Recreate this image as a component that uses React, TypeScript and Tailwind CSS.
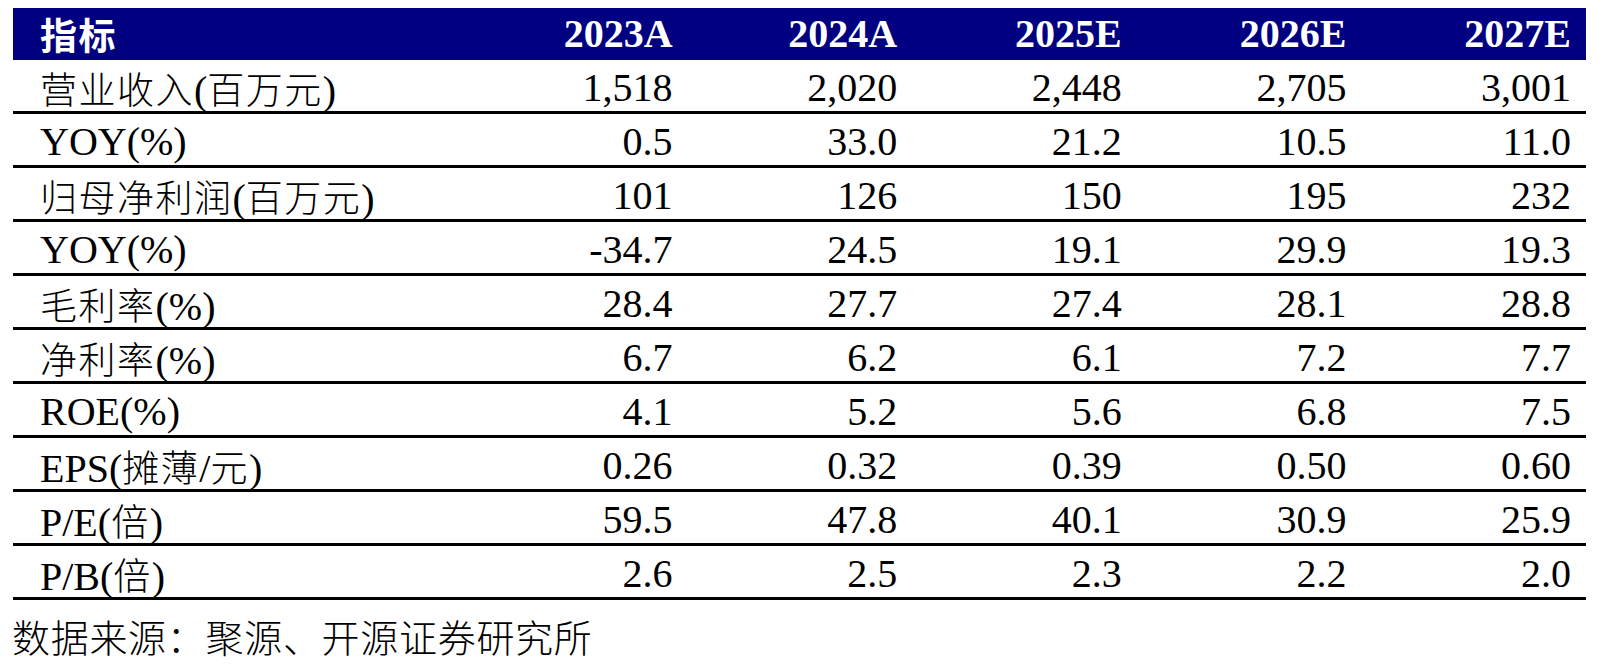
import React from "react";

const YEARS = ["2023A", "2024A", "2025E", "2026E", "2027E"];

const ROWS: { label: string; values: string[] }[] = [
  { label: "营业收入(百万元)", values: ["1,518", "2,020", "2,448", "2,705", "3,001"] },
  { label: "YOY(%)", values: ["0.5", "33.0", "21.2", "10.5", "11.0"] },
  { label: "归母净利润(百万元)", values: ["101", "126", "150", "195", "232"] },
  { label: "YOY(%)", values: ["-34.7", "24.5", "19.1", "29.9", "19.3"] },
  { label: "毛利率(%)", values: ["28.4", "27.7", "27.4", "28.1", "28.8"] },
  { label: "净利率(%)", values: ["6.7", "6.2", "6.1", "7.2", "7.7"] },
  { label: "ROE(%)", values: ["4.1", "5.2", "5.6", "6.8", "7.5"] },
  { label: "EPS(摊薄/元)", values: ["0.26", "0.32", "0.39", "0.50", "0.60"] },
  { label: "P/E(倍)", values: ["59.5", "47.8", "40.1", "30.9", "25.9"] },
  { label: "P/B(倍)", values: ["2.6", "2.5", "2.3", "2.2", "2.0"] },
];

// split a label so CJK glyphs get their own (slightly smaller) size
function Label({ text, bold }: { text: string; bold?: boolean }) {
  const parts = text.split(/([\u4e00-\u9fff]+)/).filter(Boolean);
  return (
    <>
      {parts.map((p, i) =>
        /[\u4e00-\u9fff]/.test(p) ? (
          <span
            key={i}
            className={`text-[37px] tracking-[1.5px] font-['Noto_Sans_CJK_SC',sans-serif] ${
              bold ? "font-bold" : "font-light"
            }`}
          >
            {p}
          </span>
        ) : (
          <span key={i}>{p}</span>
        )
      )}
    </>
  );
}

export default function App() {
  return (
    <div className="w-[1608px] h-[672px] bg-white overflow-hidden font-['Liberation_Serif','Noto_Sans_CJK_SC',serif] text-black">
      <div className="ml-[13px] mt-[8px] w-[1573px]">
        <div className="grid grid-cols-[450px_repeat(5,1fr)] h-[52px] bg-[#000080] text-white font-bold text-[40px] leading-[52px]">
          <div className="pl-[27px]">
            <Label text="指标" bold />
          </div>
          {YEARS.map((y) => (
            <div key={y} className="text-right pr-[15px]">
              {y}
            </div>
          ))}
        </div>
        {ROWS.map((r, i) => (
          <div
            key={i}
            className="grid grid-cols-[450px_repeat(5,1fr)] h-[54px] border-b-[3px] border-black text-[40px] leading-[46px] pt-[5px]"
          >
            <div className="pl-[27px] whitespace-nowrap">
              <Label text={r.label} />
            </div>
            {r.values.map((v, j) => (
              <div key={j} className="text-right pr-[15px]">
                {v}
              </div>
            ))}
          </div>
        ))}
      </div>
      <div className="ml-[12px] mt-[16px] text-[38px] leading-[40px] font-light font-['Noto_Sans_CJK_SC',sans-serif] tracking-[0.7px] whitespace-nowrap">
        数据来源：聚源、开源证券研究所
      </div>
    </div>
  );
}
